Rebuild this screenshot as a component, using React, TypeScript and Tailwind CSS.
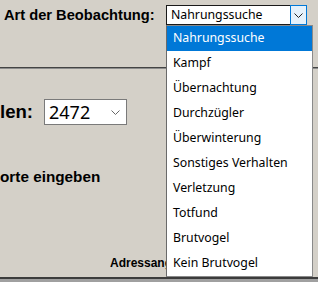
import React from "react";

const items = [
  "Nahrungssuche",
  "Kampf",
  "Übernachtung",
  "Durchzügler",
  "Überwinterung",
  "Sonstiges Verhalten",
  "Verletzung",
  "Totfund",
  "Brutvogel",
  "Kein Brutvogel",
];

function Chevron({ color }: { color: string }) {
  return (
    <svg width="9" height="5" viewBox="0 0 9 5" fill="none">
      <path d="M0.5 0.5 L4.5 4.5 L8.5 0.5" stroke={color} strokeWidth="1" />
    </svg>
  );
}

export default function App() {
  const arial = { fontFamily: '"Liberation Sans", Arial, sans-serif' };
  const ui = { fontFamily: '"Noto Sans", "Open Sans", sans-serif' };
  return (
    <div className="relative w-[318px] h-[282px] overflow-hidden bg-[#d4d0c8] flex flex-col text-black">
      <div className="flex items-center pt-[5px] pl-[4px]">
        <div className="w-[162px] font-bold text-[14.67px] leading-[20px]" style={arial}>
          Art der Beobachtung:
        </div>
        <div className="flex w-[141px] h-[20px] bg-white">
          <div className="flex-1 border border-[#1a1a1a] border-r-0 pl-[4px] text-[12.3px] leading-[18px]" style={ui}>
            Nahrungssuche
          </div>
          <div className="w-[17px] border border-[#0078d7] bg-[#e5f1fb] flex items-center justify-center">
            <Chevron color="#222" />
          </div>
        </div>
      </div>

      <div className="mt-[42px] h-[1px] bg-[#444]" />
      <div className="h-[1px] bg-[#8c8c8c]" />

      <div className="flex items-center mt-[30px]">
        <div className="font-bold text-[18.6px] leading-[26px] w-[44px]" style={arial}>
          len:
        </div>
        <div className="flex items-center w-[83px] h-[26px] bg-white border border-[#7a7a7a] pl-[4px] pr-[6px]">
          <span className="flex-1 text-[18px] leading-[24px]" style={ui}>2472</span>
          <Chevron color="#666" />
        </div>
      </div>

      <div className="mt-[43px] font-bold text-[15.3px] leading-[18px]" style={arial}>
        orte eingeben
      </div>

      <div className="mt-[70px] ml-[110px] w-[56px] overflow-hidden whitespace-nowrap font-bold text-[12px] leading-[14px]" style={arial}>
        Adressangaben
      </div>

      <div className="mt-auto h-[5px] border-t-2 border-[#3c3c3c] bg-[#a0a0a0]" />

      <div className="absolute left-[166px] top-[25px] w-[147px] bg-white border border-[#8a8a8a] border-l-[#6a6a6a]">
        {items.map((t, i) => (
          <div
            key={t}
            className={
              "h-[25px] pl-[6px] flex items-center text-[12.3px] " +
              (i === 0 ? "bg-[#0078d7] text-white" : "text-black")
            }
            style={ui}
          >
            {t}
          </div>
        ))}
      </div>
    </div>
  );
}
